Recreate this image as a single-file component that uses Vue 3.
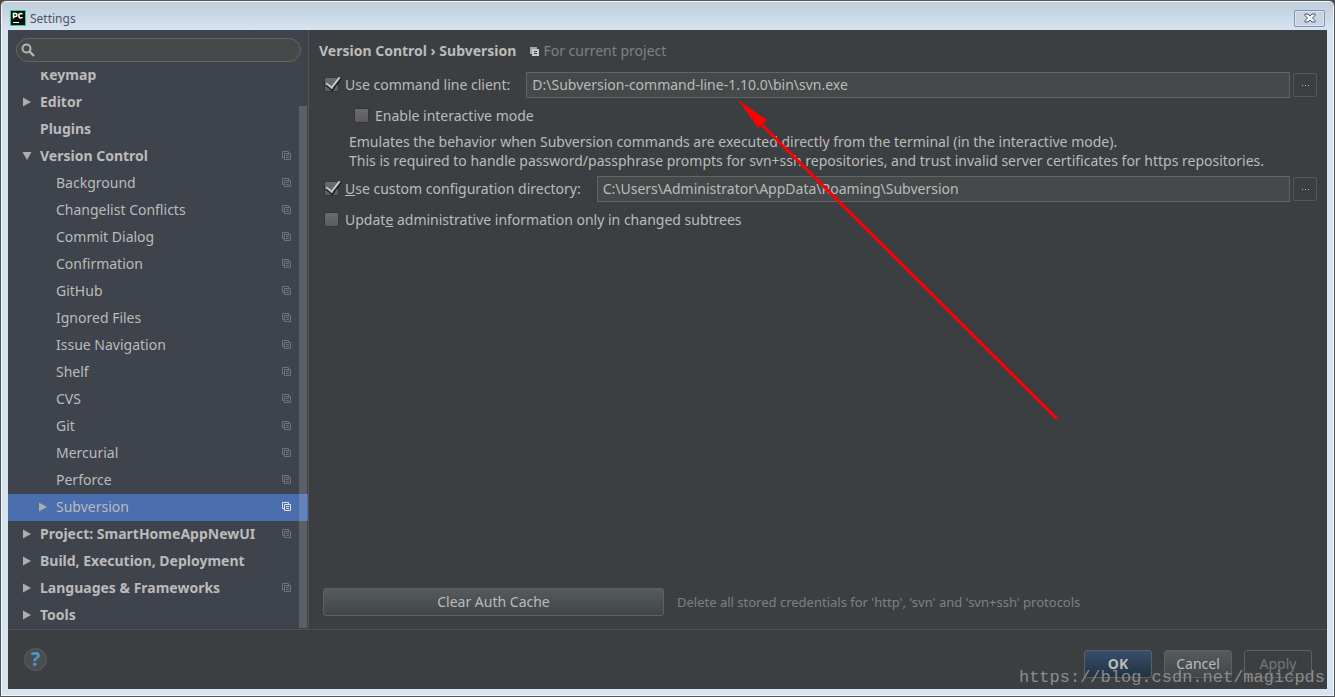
<script setup>
import { ref } from 'vue'

const query = ref('')
const commandLine = ref(true)
const interactive = ref(false)
const customDir = ref(true)
const onlyChanged = ref(false)
const clientPath = ref('D:\\Subversion-command-line-1.10.0\\bin\\svn.exe')
const configPath = ref('C:\\Users\\Administrator\\AppData\\Roaming\\Subversion')

const rows = [
  { label: 'Keymap', level: 0 },
  { label: 'Editor', level: 0, arrow: 'right' },
  { label: 'Plugins', level: 0 },
  { label: 'Version Control', level: 0, arrow: 'down', project: true },
  { label: 'Background', level: 1, project: true },
  { label: 'Changelist Conflicts', level: 1, project: true },
  { label: 'Commit Dialog', level: 1, project: true },
  { label: 'Confirmation', level: 1, project: true },
  { label: 'GitHub', level: 1, project: true },
  { label: 'Ignored Files', level: 1, project: true },
  { label: 'Issue Navigation', level: 1, project: true },
  { label: 'Shelf', level: 1, project: true },
  { label: 'CVS', level: 1, project: true },
  { label: 'Git', level: 1, project: true },
  { label: 'Mercurial', level: 1, project: true },
  { label: 'Perforce', level: 1, project: true },
  { label: 'Subversion', level: 1, arrow: 'right', project: true, selected: true },
  { label: 'Project: SmartHomeAppNewUI', level: 0, arrow: 'right', project: true },
  { label: 'Build, Execution, Deployment', level: 0, arrow: 'right' },
  { label: 'Languages & Frameworks', level: 0, arrow: 'right', project: true },
  { label: 'Tools', level: 0, arrow: 'right' },
]
</script>

<template>
  <div class="window">
    <header class="titlebar">
      <svg class="app-icon" viewBox="0 0 16 16" aria-hidden="true">
        <rect width="16" height="16" fill="#21d789" />
        <rect x="1" y="1" width="14" height="14" fill="#0b0b0b" />
        <path d="M3.5 8.5V3.5H5.5Q7 3.5 7 5T5.500 6.500H3.500M12.500 4.300Q11.800 3.400 10.700 3.400Q8.800 3.400 8.800 5.800Q8.800 8 10.700 8Q11.800 8 12.500 7.200" fill="none" stroke="#fff" stroke-width="1.500" />
        <path d="M3 12.500H9" stroke="#fff" />
      </svg>
      <h1>Settings</h1>
      <button class="close" type="button" aria-label="Close">
        <svg viewBox="0 0 12 10" aria-hidden="true">
          <path d="M1 1H4L6 3L8 1H11V2.500L8.500 5L11 7.500V9H8L6 7L4 9H1V7.500L3.500 5L1 2.500Z" fill="#f4f6f8" stroke="#4c5566" />
        </svg>
      </button>
    </header>

    <div class="body">
      <div class="panes">
        <aside class="sidebar">
          <label class="search">
            <svg viewBox="0 0 14 14" aria-hidden="true">
              <circle cx="5.500" cy="5.500" r="4" fill="none" stroke="#b4b4b4" stroke-width="2" />
              <path d="M8.500 8.500L13 13" stroke="#b4b4b4" stroke-width="2.400" />
            </svg>
            <input v-model="query" type="text" aria-label="Search settings" />
          </label>
          <nav class="tree">
            <a
              v-for="row in rows"
              :key="row.label"
              href="#"
              class="row"
              :class="{ child: row.level === 1, selected: row.selected }"
            >
              <span class="arrow">
                <svg v-if="row.arrow === 'right'" viewBox="0 0 10 10" aria-hidden="true"><path d="M1 0.500L9 5L1 9.500Z" /></svg>
                <svg v-if="row.arrow === 'down'" viewBox="0 0 10 10" aria-hidden="true"><path d="M0.500 1H9.500L5 9Z" /></svg>
              </span>
              <span class="label">{{ row.label }}</span>
              <svg v-if="row.project" class="copy" viewBox="0 0 9 9" aria-hidden="true">
                <path d="M2 6.500H0.500V0.500H6.500V2M2.500 2.500H8.500V8.500H2.500ZM4 4.500H7M4 6.500H7" />
              </svg>
            </a>
            <span class="scrollbar"></span>
          </nav>
        </aside>

        <main class="content">
          <div class="crumbs">
            <h2>Version Control › Subversion</h2>
            <svg class="copy" viewBox="0 0 9 9" aria-hidden="true">
              <path d="M0 0H7V2H2V7H0Z" fill="#9aa7b0" />
              <path d="M2 2H9V9H2ZM4 4V5H7V4ZM4 6V7H7V6Z" fill="#c5c8ca" fill-rule="evenodd" />
            </svg>
            <span class="scope">For current project</span>
          </div>

          <div class="field">
            <label class="check"><input v-model="commandLine" type="checkbox" /><span>Use command line client:</span></label>
            <input v-model="clientPath" class="path" type="text" aria-label="Command line client path" />
            <button class="browse" type="button" aria-label="Browse for client"><i></i><i></i><i></i></button>
          </div>

          <label class="check nested"><input v-model="interactive" type="checkbox" /><span>Enable interactive mode</span></label>

          <p class="note">
            Emulates the behavior when Subversion commands are executed directly from the terminal (in the interactive mode).<br />
            This is required to handle password/passphrase prompts for svn+ssh repositories, and trust invalid server certificates for https repositories.
          </p>

          <div class="field">
            <label class="check"><input v-model="customDir" type="checkbox" /><span><u>U</u>se custom configuration directory:</span></label>
            <input v-model="configPath" class="path" type="text" aria-label="Configuration directory" />
            <button class="browse" type="button" aria-label="Browse for directory"><i></i><i></i><i></i></button>
          </div>

          <label class="check last"><input v-model="onlyChanged" type="checkbox" /><span>Updat<u>e</u> administrative information only in changed subtrees</span></label>

          <div class="auth">
            <button class="button clear" type="button">Clear Auth Cache</button>
            <span class="hint">Delete all stored credentials for 'http', 'svn' and 'svn+ssh' protocols</span>
          </div>
        </main>
      </div>

      <footer class="footer">
        <button class="help" type="button" aria-label="Help">?</button>
        <div class="actions">
          <button class="button ok" type="button">OK</button>
          <button class="button" type="button">Cancel</button>
          <button class="button apply" type="button" disabled>Apply</button>
        </div>
      </footer>
    </div>

    <svg class="pointer" viewBox="0 0 320 320" aria-hidden="true">
      <path d="M22 23L319 319" stroke="#f00" stroke-width="3" />
      <path d="M0 0L29 20L20 28Z" fill="#f00" />
    </svg>
    <span class="watermark">https://blog.csdn.net/magicpds</span>
  </div>
</template>

<style>
body {
  background: #4a4a4c;
}
</style>

<style scoped>
* {
  box-sizing: border-box;
}

.window {
  position: relative;
  display: flex;
  flex-direction: column;
  min-height: 100vh;
  padding: 1px 7px 7px;
  border: 1px solid #55565a;
  border-radius: 6px 6px 0 0;
  background: linear-gradient(#bfcddb, #d7e4f2 30px);
  box-shadow: inset 0 0 0 1px #f2f6fa;
  font: 14px/20px "Noto Sans", "Open Sans", sans-serif;
  color: #bbb;
  overflow: hidden;
}

button,
input {
  font: inherit;
  color: inherit;
}

.titlebar {
  display: flex;
  align-items: center;
  height: 28px;
  padding: 4px 2px 0;
}

.app-icon {
  width: 16px;
  height: 16px;
}

h1 {
  margin: 0 auto 0 4px;
  padding-top: 2px;
  font-size: 12px;
  font-weight: 400;
  color: #4c5562;
}

.close {
  display: grid;
  place-items: center;
  width: 31px;
  height: 17px;
  padding: 0;
  border: 1px solid #8392b0;
  border-radius: 2px;
  background: #c7d4e2;
  box-shadow: inset 0 0 0 1px #dbe5ef;
}

.close svg {
  width: 12px;
  height: 10px;
}

.body {
  flex: 1;
  display: flex;
  flex-direction: column;
  background: #3c3f41;
}

.panes {
  flex: 1;
  display: flex;
  border-bottom: 1px solid #515151;
}

.sidebar {
  flex: none;
  display: flex;
  flex-direction: column;
  width: 301px;
  border-right: 1px solid #515151;
  background: #3f434c;
}

.search {
  display: flex;
  align-items: center;
  gap: 6px;
  height: 24px;
  margin: 8px 7px 10px 8px;
  padding: 0 4px;
  border: 1px solid #646464;
  border-radius: 12px;
  background: #45494a;
}

.search svg {
  width: 14px;
  height: 14px;
}

.search input {
  flex: 1;
  min-width: 0;
  border: 0;
  outline: 0;
  padding: 0;
  background: none;
}

.tree {
  position: relative;
  flex: 1 1 0;
  display: flex;
  flex-direction: column;
  justify-content: flex-end;
  min-height: 0;
  overflow: hidden;
}

.row {
  flex: none;
  display: flex;
  align-items: center;
  height: 27px;
  padding: 0 17px 2px 14px;
  font-weight: 700;
  color: #bbb;
  text-decoration: none;
}

.child {
  padding-left: 30px;
  font-weight: 400;
}

.selected {
  background: #4b6eaf;
}

.arrow {
  display: flex;
  width: 18px;
}

.arrow svg {
  width: 10px;
  height: 10px;
  fill: #adadad;
}

.label {
  flex: 1;
  padding-top: 1px;
  white-space: nowrap;
}

.copy {
  flex: none;
  width: 9px;
  height: 9px;
}

.row .copy {
  fill: none;
  stroke: #6e757a;
}

.selected .copy {
  stroke: #e0e0e0;
}

.scrollbar {
  position: absolute;
  top: 34px;
  right: 1px;
  bottom: 1px;
  width: 8px;
  background: rgba(255, 255, 255, 0.15);
}

.content {
  flex: 1;
  display: flex;
  flex-direction: column;
  min-width: 0;
  padding: 11px 10px 13px;
}

.crumbs {
  display: flex;
  align-items: center;
}

h2 {
  margin: 0 14px 0 0;
  font-size: 14px;
  line-height: 20px;
}

.scope {
  margin-left: 4px;
  color: #808080;
}

.field {
  display: flex;
  align-items: center;
  height: 26px;
  padding-left: 5px;
}

.crumbs + .field {
  margin-top: 11px;
}

.check {
  display: flex;
  align-items: center;
  gap: 6px;
  white-space: nowrap;
}

.check input {
  appearance: none;
  position: relative;
  flex: none;
  width: 15px;
  height: 15px;
  margin: 0 0 2px;
  border: 1px solid #333536;
  border-radius: 2px;
  background: linear-gradient(#6b6b6b, #5c5c5c);
}

.check input:checked::before,
.check input:checked::after {
  content: "";
  position: absolute;
  left: 4px;
  top: -3px;
  width: 6px;
  height: 12px;
  border: solid #222;
  border-width: 0 3px 3px 0;
  transform: rotate(38deg);
}

.check input:checked::after {
  top: -4px;
  border-color: #c8c8c8;
  border-width: 0 2px 2px 0;
}

.path {
  flex: 1;
  min-width: 0;
  height: 26px;
  margin: 0 3px 0 16px;
  padding: 0 5px 2px;
  border: 1px solid #646464;
  background: #45494a;
}

.browse {
  display: flex;
  align-items: center;
  justify-content: center;
  gap: 2px;
  width: 24px;
  height: 24px;
  padding: 0;
  border: 1px solid #565656;
  border-radius: 2px;
  background: none;
}

.browse i {
  width: 1px;
  height: 1px;
  background: #bbb;
}

.nested {
  margin: 8px 0 0 35px;
}

.note {
  margin: 6px 0 6px 30px;
  line-height: 19px;
  white-space: nowrap;
}

.last {
  margin: 8px 0 0 5px;
}

.auth {
  display: flex;
  align-items: center;
  gap: 13px;
  margin-top: auto;
  padding-left: 4px;
}

.button {
  width: 68px;
  height: 28px;
  padding: 0;
  border: 1px solid #5e6060;
  border-radius: 3px;
  background: linear-gradient(#555a5c, #414648);
}

.clear {
  width: 341px;
}

.hint {
  font-size: 13px;
  color: #808080;
}

.footer {
  display: flex;
  align-items: center;
  justify-content: space-between;
  height: 59px;
  padding: 0 15px 0 16px;
}

.help {
  width: 23px;
  height: 23px;
  padding: 0 0 2px;
  border: 1px solid #5a5e60;
  border-radius: 50%;
  background: #4a4e51;
  font-size: 20px;
  font-weight: 700;
  line-height: 19px;
  color: #4a9cc8;
}

.actions {
  display: flex;
  gap: 12px;
  padding-top: 9px;
}

.ok {
  background: linear-gradient(#384f6b, #233143);
  font-weight: 700;
}

.apply {
  background: none;
  color: #777;
}

.pointer {
  position: absolute;
  left: 737px;
  top: 99px;
  width: 320px;
  height: 320px;
}

.watermark {
  position: absolute;
  right: 9px;
  bottom: 8px;
  font: 17px/20px "Liberation Mono", monospace;
  color: #8c8c8c;
  pointer-events: none;
}
</style>
